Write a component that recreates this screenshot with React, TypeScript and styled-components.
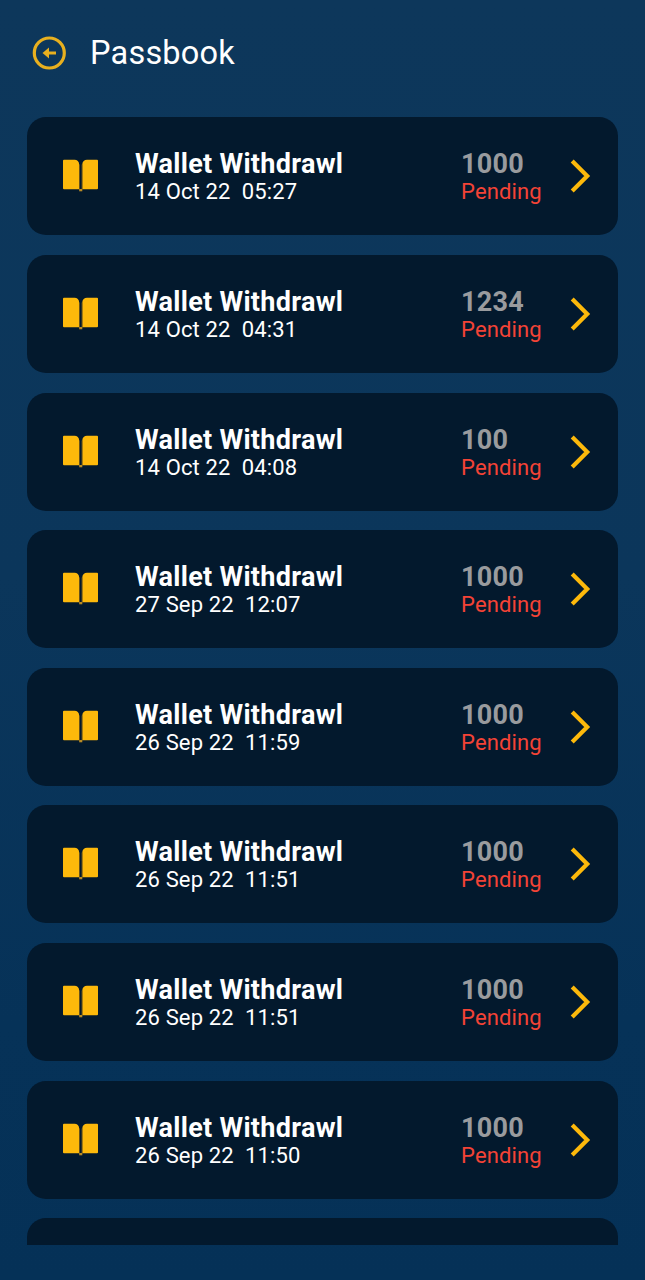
import React from 'react';
import styled, { createGlobalStyle } from 'styled-components';

const Global = createGlobalStyle`
  * { box-sizing: border-box; }
  body { margin: 0; background: #053157; font-family: Roboto, sans-serif; }
`;

const Screen = styled.main`
  height: 1280px;
  display: flex;
  flex-direction: column;
  overflow: hidden;
  background: linear-gradient(#0d375b 0%, #0b365b 45%, #063258 80%, #053157 100%);
`;

const Header = styled.header`
  height: 117.4px;
  flex: none;
  display: flex;
  align-items: flex-start;
  gap: 23px;
  padding: 36px 32px 0;
`;

const BackIcon = styled.svg`
  width: 35px;
  height: 35px;
`;

const Title = styled.h1`
  margin: -2px 0 0;
  font-size: 32.5px;
  line-height: 38px;
  font-weight: 400;
  letter-spacing: 0.2px;
  color: #fff;
`;

const List = styled.ul`
  height: 1127.6px;
  flex: none;
  margin: 0 27px;
  padding: 0;
  list-style: none;
  overflow: hidden;
`;

const Card = styled.li`
  height: 118px;
  margin-bottom: 19.6px;
  padding-left: 36px;
  display: flex;
  align-items: center;
  border-radius: 19px;
  background: #03192d;
`;

const BookIcon = styled.svg`
  width: 36px;
  height: 34px;
  margin-right: 36px;
  flex: none;
`;

const Details = styled.div`
  width: 326px;
  flex: none;
  padding-top: 3px;
`;

const Status = styled.div`
  width: 109px;
  flex: none;
  padding-top: 3px;
`;

const Strong = styled.div<{ $muted?: boolean }>`
  font-size: 27px;
  line-height: 29px;
  font-weight: 700;
  letter-spacing: 0.3px;
  color: ${(p) => (p.$muted ? '#999b9e' : '#fff')};
`;

const Small = styled.div<{ $alert?: boolean }>`
  font-size: 22px;
  line-height: 26px;
  letter-spacing: 0.15px;
  white-space: pre;
  color: ${(p) => (p.$alert ? '#f44336' : '#fff')};
`;

const Chevron = styled.svg`
  width: 22px;
  height: 34px;
  flex: none;
`;

const entries = [
  { date: '14 Oct 22  05:27', amount: '1000' },
  { date: '14 Oct 22  04:31', amount: '1234' },
  { date: '14 Oct 22  04:08', amount: '100' },
  { date: '27 Sep 22  12:07', amount: '1000' },
  { date: '26 Sep 22  11:59', amount: '1000' },
  { date: '26 Sep 22  11:51', amount: '1000' },
  { date: '26 Sep 22  11:51', amount: '1000' },
  { date: '26 Sep 22  11:50', amount: '1000' },
];

export default function App() {
  return (
    <>
      <Global />
      <Screen>
        <Header>
          <BackIcon viewBox="0 0 35 35" fill="none" stroke="#e8b01f">
            <circle cx="17.3" cy="17" r="15" strokeWidth="3.2" />
            <path d="M24 17H15" strokeWidth="3" />
            <path d="M10.500 17l6.500-5.500v11z" fill="#e8b01f" stroke="none" />
          </BackIcon>
          <Title>Passbook</Title>
        </Header>
        <List>
          {entries.map((e, i) => (
            <Card key={i}>
              <BookIcon viewBox="0 0 36 34" fill="#fdb90b">
                <path d="M1 .8h10.500c2.600 0 4.700 1.700 4.700 4.700V30.300H1a1 1 0 0 1-1-1V1.800a1 1 0 0 1 1-1z" />
                <path d="M34 .8H24c-2.600 0-4.700 1.700-4.700 4.700V30.300H34a1 1 0 0 0 1-1V1.800a1 1 0 0 0-1-1z" />
                <path d="M16.200 5.500h.7v25h-.7zM18.600 5.500h.7v25h-.7z" fill="#7b5c18" />
                <path d="M16.200 30h3.100v2.300h-3.100z" fill="#b98b25" />
              </BookIcon>
              <Details>
                <Strong>Wallet Withdrawl</Strong>
                <Small>{e.date}</Small>
              </Details>
              <Status>
                <Strong $muted>{e.amount}</Strong>
                <Small $alert>Pending</Small>
              </Status>
              <Chevron viewBox="0 0 22 34" fill="none" stroke="#fdb90b" strokeWidth="4.2">
                <path d="M2.200 2l15 15-15 15" />
              </Chevron>
            </Card>
          ))}
          <Card />
        </List>
      </Screen>
    </>
  );
}
